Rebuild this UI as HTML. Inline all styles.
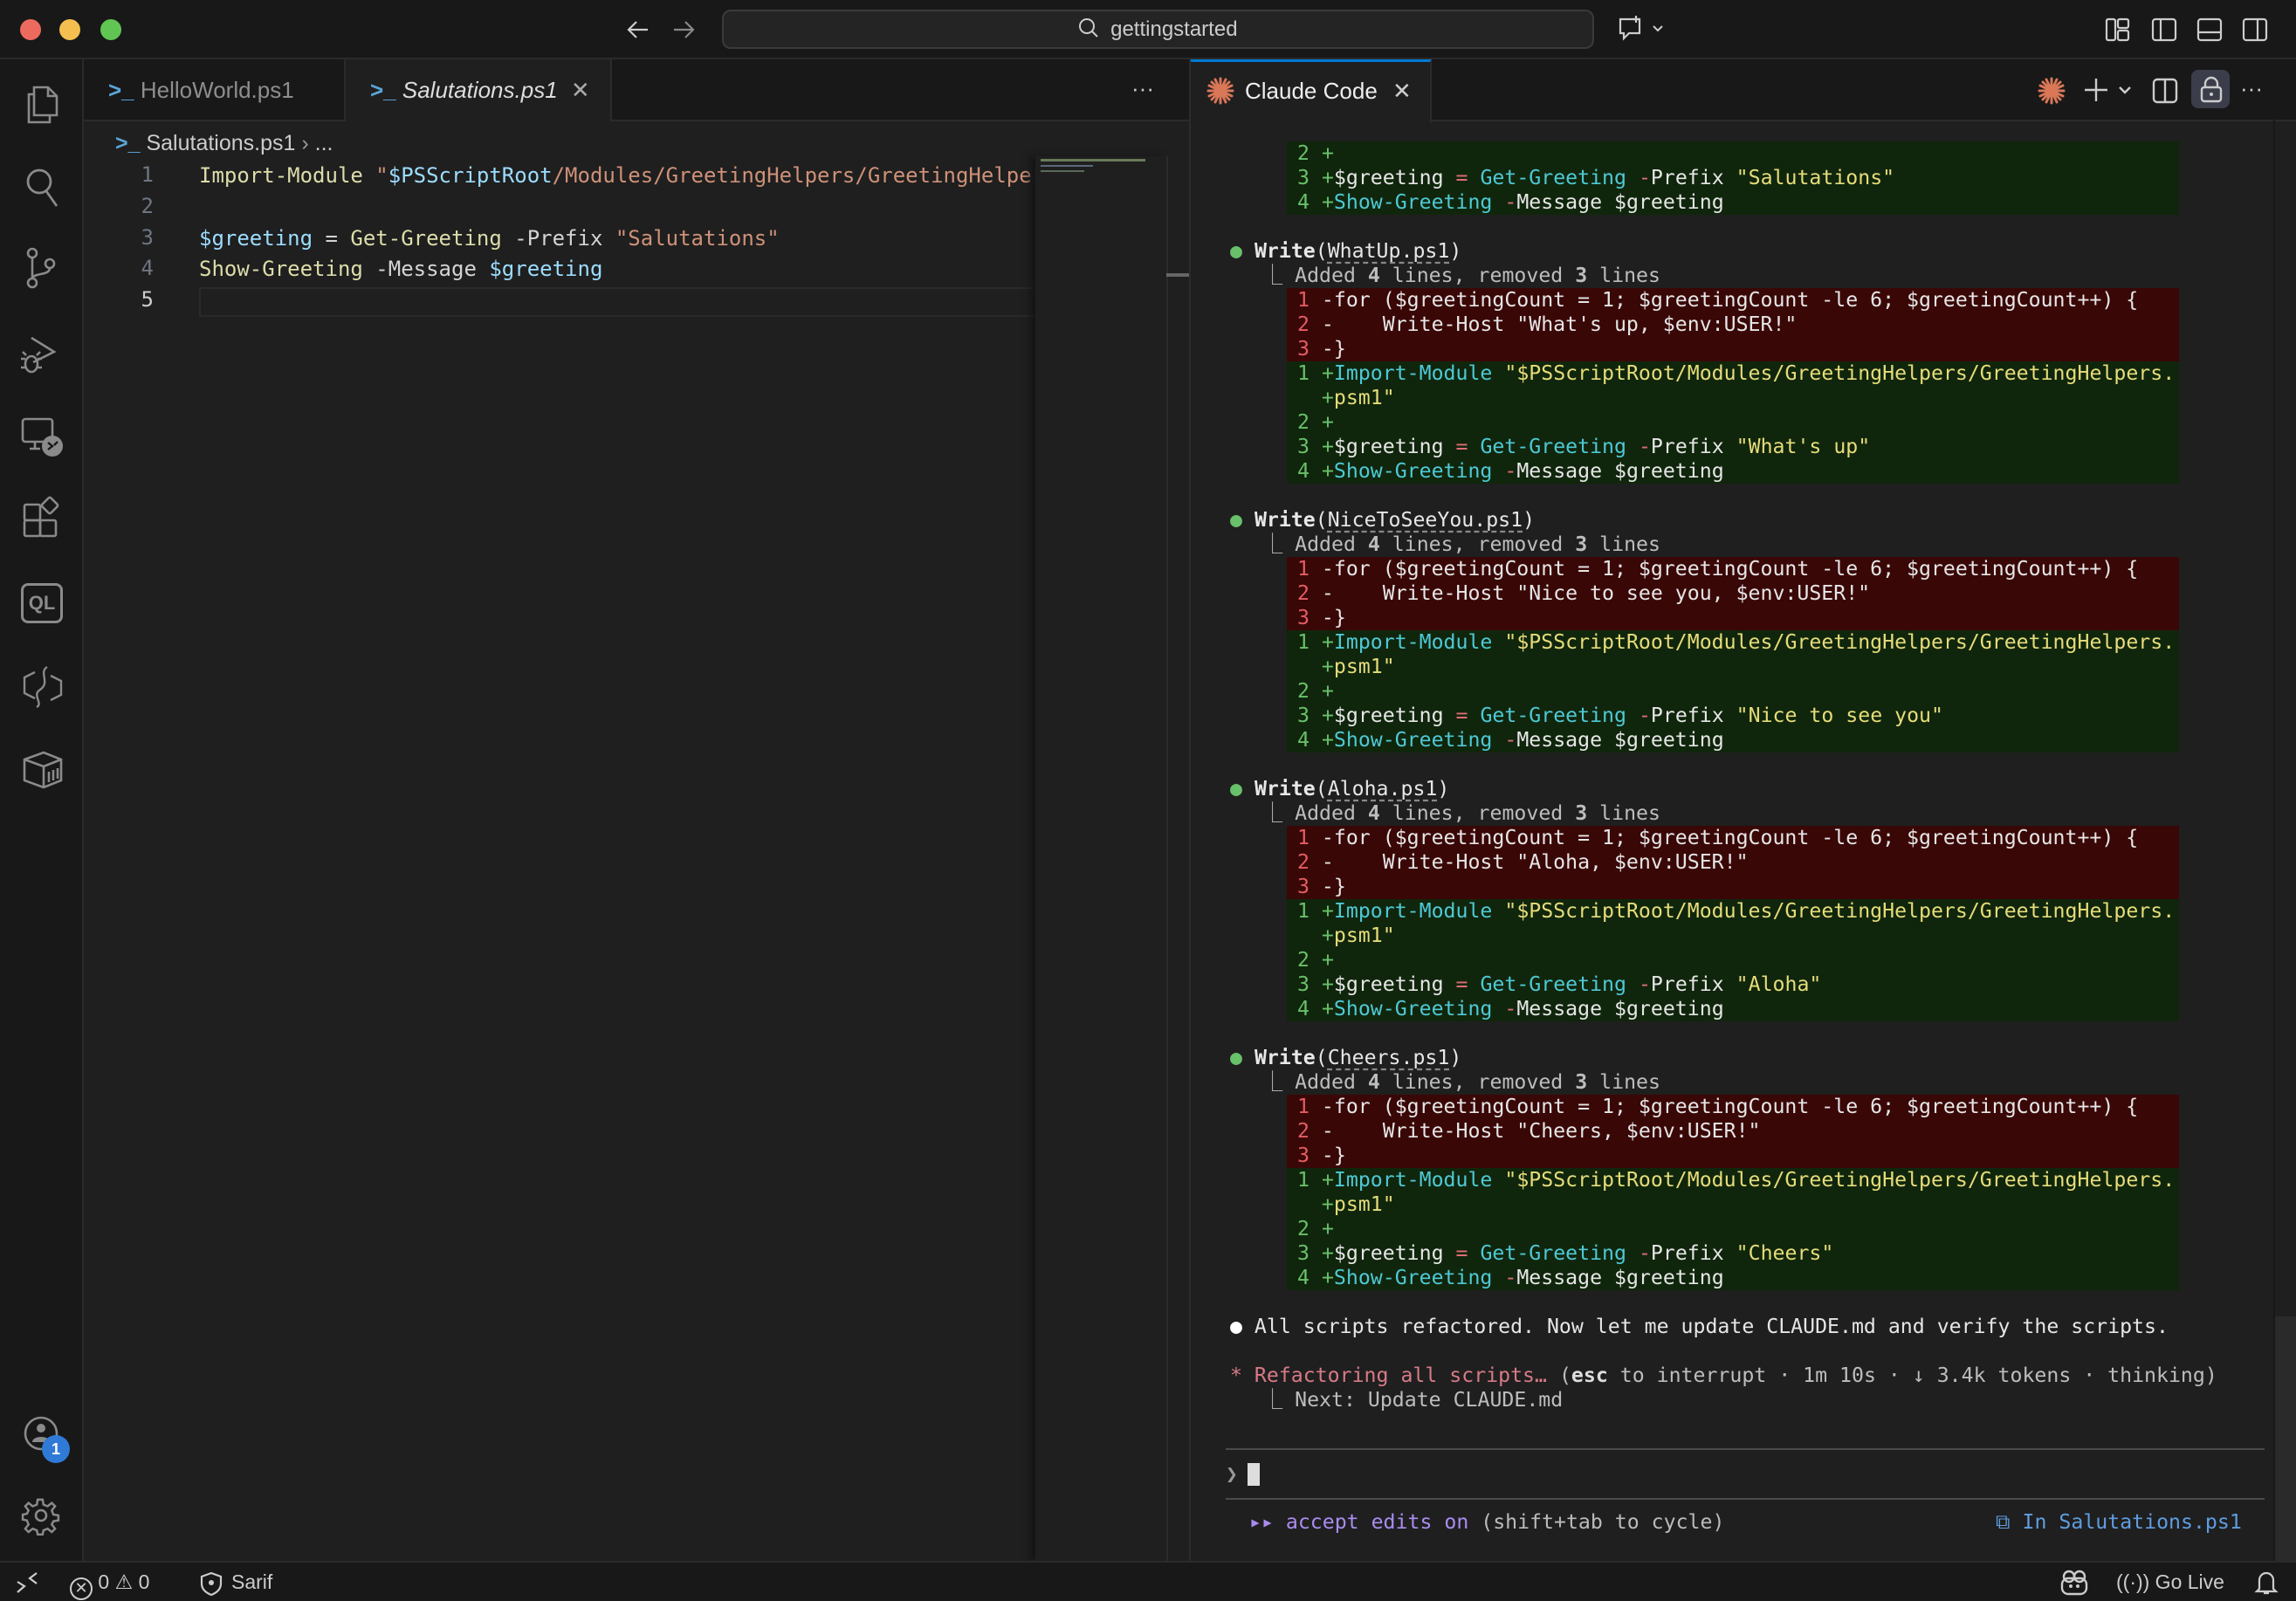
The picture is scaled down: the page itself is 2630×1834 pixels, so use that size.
<!DOCTYPE html>
<html><head><meta charset="utf-8"><style>
*{margin:0;padding:0;box-sizing:border-box}
html,body{width:2630px;height:1834px;overflow:hidden;background:#181818;font-family:"Liberation Sans",sans-serif;color:#ccc}
.abs{position:absolute}
.mono{font-family:"DejaVu Sans Mono","Liberation Mono",monospace}
#title{left:0;top:0;width:2630px;height:68px;background:#181818;border-bottom:2px solid #2a2a2a}
.tl{width:24px;height:24px;border-radius:50%;top:22px}
#search{left:827px;top:11px;width:999px;height:45px;background:#242424;border:2px solid #3a3a3a;border-radius:10px;text-align:center;font-size:24px;line-height:41px;color:#ccc}
#act{left:0;top:68px;width:96px;height:1720px;background:#181818;border-right:2px solid #2b2b2b}
#tabs{left:96px;top:68px;width:1266px;height:71px;background:#181818;border-bottom:2px solid #2b2b2b}
.tab{top:0;height:71px;font-size:26px;line-height:71px;padding-left:28px;border-right:2px solid #2b2b2b}
#editor{left:96px;top:139px;width:1266px;height:1649px;background:#1f1f1f}
.code{font-size:24px;line-height:35.8px;white-space:pre}
#rp{left:1362px;top:68px;width:1268px;height:1720px;background:#1f1f1f;border-left:2px solid #2b2b2b}
#rtabs{left:0;top:0;width:1268px;height:71px;background:#181818;border-bottom:2px solid #2b2b2b}
#rc{left:45px;top:94px;width:1190px;font-size:23.2px;line-height:28px;white-space:pre;color:#e6e6e6}
.g,.d{margin-left:65px;width:1022px;padding-left:12px;height:28px}
.g{background:#10260c}.d{background:#3a0707}
.g .n{color:#69c06a}.d .n{color:#e35d62}
.c{color:#4ec9d6}.y{color:#e6dc7a}.p{color:#e06c75}.gp{color:#69c06a}
.h{color:#e8e8e8}.u{text-decoration:underline dashed #888;text-underline-offset:5px}
.dim{color:#bdbdbd}
.s{padding-left:23px}
#status{left:0;top:1788px;width:2630px;height:46px;background:#181818;border-top:2px solid #2b2b2b;font-size:23px;line-height:44px;color:#ccc}
svg{position:absolute;overflow:visible}
</style></head><body>

<div id="title" class="abs">
 <div class="abs tl" style="left:23px;background:#ed6a5e"></div>
 <div class="abs tl" style="left:68px;background:#f4bf4f"></div>
 <div class="abs tl" style="left:115px;background:#61c554"></div>
 <svg style="left:718px;top:22px" width="26" height="24"><path d="M24 12H3M11 3L2 12L11 21" stroke="#ccc" stroke-width="2.2" fill="none"/></svg>
 <svg style="left:770px;top:22px" width="26" height="24"><path d="M2 12H23M15 3L24 12L15 21" stroke="#888" stroke-width="2.2" fill="none"/></svg>
 <div id="search" class="abs"><span style="display:inline-block;position:relative;width:30px;height:24px;vertical-align:-3px"><svg style="left:0;top:0" width="26" height="26"><circle cx="10" cy="10" r="8" stroke="#ccc" stroke-width="2" fill="none"/><path d="M16 16L22 22" stroke="#ccc" stroke-width="2"/></svg></span> gettingstarted</div>
 <svg style="left:1852px;top:18px" width="60" height="32"><path d="M4 4H26V20H14L8 26V20H4Z" stroke="#ccc" stroke-width="2.2" fill="none"/><path d="M22 0V8M18 4H26" stroke="#ccc" stroke-width="2.2"/><path d="M42 12L47 17L52 12" stroke="#ccc" stroke-width="2" fill="none"/></svg>
 <svg style="left:2412px;top:20px" width="200" height="28">
  <g stroke="#ccc" stroke-width="2.2" fill="none">
   <rect x="1" y="2" width="10" height="24" rx="2"/><rect x="14" y="2" width="12" height="10" rx="2"/><rect x="14" y="15" width="12" height="11" rx="2"/>
   <rect x="54" y="2" width="26" height="24" rx="3"/><path d="M63 2V26"/>
   <rect x="106" y="2" width="26" height="24" rx="3"/><path d="M106 17H132"/>
   <rect x="158" y="2" width="26" height="24" rx="3"/><path d="M174 2V26"/>
  </g></svg>
</div>

<div id="act" class="abs">
 <svg style="left:27px;top:26px" width="44" height="50"><g stroke="#8a8a8a" stroke-width="2.6" fill="none"><path d="M12 6H28L38 16V38H12Z"/><path d="M28 6V16H38"/><path d="M12 14H6V46H30V38"/></g></svg>
 <svg style="left:27px;top:124px" width="44" height="50"><g stroke="#8a8a8a" stroke-width="2.8" fill="none"><circle cx="18" cy="16" r="13"/><path d="M26 27L38 44"/></g></svg>
 <svg style="left:27px;top:214px" width="44" height="50"><g stroke="#8a8a8a" stroke-width="2.6" fill="none"><circle cx="10" cy="8" r="5"/><circle cx="10" cy="42" r="5"/><circle cx="30" cy="20" r="5"/><path d="M10 13V37M30 25C30 34 12 30 10 37"/></g></svg>
 <svg style="left:22px;top:315px" width="50" height="50"><g stroke="#8a8a8a" stroke-width="2.6" fill="none"><path d="M14 4L40 20L16 32"/><ellipse cx="14" cy="34" rx="7" ry="9"/><path d="M2 28H7M2 38H7M21 28H26M21 38H26M8 24L4 20M20 24L24 20"/></g></svg>
 <svg style="left:22px;top:408px" width="50" height="50"><g stroke="#8a8a8a" stroke-width="2.6" fill="none"><rect x="4" y="4" width="34" height="26" rx="3"/><path d="M12 38H24M18 30V38"/></g><circle cx="38" cy="35" r="12" fill="#8a8a8a"/><path d="M33 31L38 35L33 39M44 30L40 34" stroke="#181818" stroke-width="2.4" fill="none"/></svg>
 <svg style="left:26px;top:502px" width="46" height="46"><g stroke="#8a8a8a" stroke-width="2.6" fill="none"><rect x="2" y="8" width="18" height="18" rx="2"/><rect x="2" y="26" width="18" height="18" rx="2"/><rect x="20" y="26" width="18" height="18" rx="2"/><rect x="24" y="2" width="14" height="14" rx="2" transform="rotate(45 31 9)"/></g></svg>
 <div class="abs" style="left:24px;top:600px;width:48px;height:46px;border:3px solid #8a8a8a;border-radius:8px;color:#8a8a8a;font:bold 22px 'Liberation Sans',sans-serif;text-align:center;line-height:40px">QL</div>
 <svg style="left:24px;top:694px" width="50" height="50"><g stroke="#8a8a8a" stroke-width="2.4" fill="none"><path d="M16 8L4 14V32L16 38M34 12L46 18V34L34 40"/><path d="M30 2C20 8 34 20 22 28C12 34 26 44 18 48"/></g></svg>
 <svg style="left:24px;top:790px" width="50" height="46"><g stroke="#8a8a8a" stroke-width="2.6" fill="none"><path d="M4 12L26 4L46 12V36L26 44L4 36Z"/><path d="M4 12L26 20L46 12M26 20V44M32 26V38M37 24V36M42 22V34"/></g></svg>
 <svg style="left:27px;top:1554px" width="50" height="50"><circle cx="20" cy="20" r="18" stroke="#8a8a8a" stroke-width="2.6" fill="none"/><circle cx="20" cy="14" r="5" fill="#8a8a8a"/><path d="M10 30C10 22 30 22 30 30Z" fill="#8a8a8a"/></svg>
 <div class="abs" style="left:48px;top:1576px;width:32px;height:32px;border-radius:50%;background:#2f7ad6;color:#fff;font:bold 18px 'Liberation Sans';text-align:center;line-height:32px">1</div>
 <svg style="left:27px;top:1648px" width="44" height="44"><g stroke="#8a8a8a" stroke-width="2.6" fill="none"><circle cx="20" cy="20" r="6"/><path d="M17 2H23L24 8L29 10L34 6L38 10L34 15L36 20L42 21V27L36 28L34 32L38 37L34 41L29 37L24 39L23 44H17L16 39L11 37L6 41L2 37L6 32L4 27L-1 26V20L4 19L6 15L2 10L6 6L11 10L16 8Z" transform="scale(0.95)"/></g></svg>
</div>

<div id="tabs" class="abs">
 <div class="abs tab" style="left:0;width:300px;color:#8e8e8e"><span style="color:#5aa5d8;font-weight:bold">&gt;_</span> HelloWorld.ps1</div>
 <div class="abs tab" style="left:300px;width:305px;background:#1f1f1f;height:73px;color:#ddd;font-style:italic"><span style="color:#5aa5d8;font-weight:bold;font-style:normal">&gt;_</span> Salutations.ps1 <span style="font-style:normal;color:#aaa;margin-left:8px">✕</span></div>
 <div class="abs" style="left:1200px;top:0;line-height:66px;font-size:26px;color:#ccc">···</div>
</div>

<div id="editor" class="abs">
 <div class="abs" style="left:36px;top:6px;font-size:25px;line-height:38px;color:#ccc"><span style="color:#5aa5d8;font-weight:bold">&gt;_</span> Salutations.ps1 <span style="color:#999">›</span> ...</div>
 <div class="abs code mono" style="left:40px;top:44px;width:40px;text-align:right;color:#6e7681">1
2
3
4
<span style="color:#ccc">5</span></div>
 <div class="abs" style="left:132px;top:190px;width:1054px;height:34px;border:2px solid #2a2a2a"></div>
 <div class="abs code mono" style="left:132px;top:45px;width:1054px;overflow:hidden;color:#d4d4d4"><span style="color:#dcdcaa">Import-Module</span> <span style="color:#ce9178">"</span><span style="color:#9cdcfe">$PSScriptRoot</span><span style="color:#ce9178">/Modules/GreetingHelpers/GreetingHelpers.psm1"</span>

<span style="color:#9cdcfe">$greeting</span> = <span style="color:#dcdcaa">Get-Greeting</span> -Prefix <span style="color:#ce9178">"Salutations"</span>
<span style="color:#dcdcaa">Show-Greeting</span> -Message <span style="color:#9cdcfe">$greeting</span>
</div>
 <div class="abs" style="left:1090px;top:40px;width:150px;height:1609px;background:#1f1f1f;box-shadow:-6px 0 8px #151515"></div>
 <div class="abs" style="left:1096px;top:43px;width:120px;height:3px;background:#6a7a5a"></div>
 <div class="abs" style="left:1096px;top:50px;width:60px;height:2px;background:#5a6a7a"></div>
 <div class="abs" style="left:1096px;top:56px;width:50px;height:2px;background:#5a6a5a"></div>
 <div class="abs" style="left:1240px;top:40px;width:2px;height:1609px;background:#2b2b2b"></div>
 <div class="abs" style="left:1240px;top:174px;width:26px;height:4px;background:#666"></div>
</div>

<div id="rp" class="abs">
 <div id="rtabs" class="abs">
  <div class="abs" style="left:0;top:0;width:276px;height:73px;background:#1f1f1f;border-top:3px solid #0078d4;border-right:2px solid #2b2b2b;font-size:26px;line-height:66px;color:#eee;padding-left:62px">Claude Code <span style="color:#ccc;margin-left:10px">✕</span></div>
  <svg style="left:18px;top:20px" width="32" height="32"><g stroke="#d97757" stroke-width="3" stroke-linecap="round"><path d="M16 2V30M2 16H30M6 6L26 26M26 6L6 26M10 3L22 29M22 3L10 29M3 10L29 22M3 22L29 10"/></g></svg>
  <svg style="left:970px;top:20px" width="32" height="32"><g stroke="#d97757" stroke-width="3" stroke-linecap="round"><path d="M16 2V30M2 16H30M6 6L26 26M26 6L6 26M10 3L22 29M22 3L10 29M3 10L29 22M3 22L29 10"/></g></svg>
  <svg style="left:1024px;top:22px" width="60" height="28"><g stroke="#ccc" stroke-width="2.4" fill="none"><path d="M13 0V26M0 13H26M40 10L46 16L52 10"/></g></svg>
  <svg style="left:1102px;top:22px" width="28" height="28"><g stroke="#ccc" stroke-width="2.4" fill="none"><rect x="1" y="1" width="26" height="26" rx="4"/><path d="M14 1V27"/></g></svg>
  <div class="abs" style="left:1146px;top:12px;width:44px;height:44px;border-radius:8px;background:#3b3d4a"></div>
  <svg style="left:1157px;top:20px" width="24" height="30"><g stroke="#ccc" stroke-width="2.4" fill="none"><rect x="1" y="12" width="22" height="16" rx="3"/><path d="M5 12V8A7 7 0 0 1 19 8V12"/></g><circle cx="12" cy="20" r="2" fill="#ccc"/></svg>
  <div class="abs" style="left:1202px;top:0;line-height:66px;font-size:26px;color:#ccc">···</div>
 </div>

 <div id="rc" class="abs mono"><div class="g"><span class="n">2</span> <span class="gp">+</span></div><div class="g"><span class="n">3</span> <span class="gp">+</span>$greeting <span class="p">=</span> <span class="c">Get-Greeting</span> <span class="p">-</span>Prefix <span class="y">"Salutations"</span></div><div class="g"><span class="n">4</span> <span class="gp">+</span><span class="c">Show-Greeting</span> <span class="p">-</span>Message $greeting</div>
<div><span class="gp">●</span> <b class="h">Write</b>(<span class="u">WhatUp.ps1</span>)</div><div class="dim s"> ⎿ Added <b>4</b> lines, removed <b>3</b> lines</div><div class="d"><span class="n">1</span> -for ($greetingCount = 1; $greetingCount -le 6; $greetingCount++) {</div><div class="d"><span class="n">2</span> -    Write-Host "What's up, $env:USER!"</div><div class="d"><span class="n">3</span> -}</div><div class="g"><span class="n">1</span> <span class="gp">+</span><span class="c">Import-Module</span> <span class="y">"$PSScriptRoot/Modules/GreetingHelpers/GreetingHelpers.</span></div><div class="g">  <span class="gp">+</span><span class="y">psm1"</span></div><div class="g"><span class="n">2</span> <span class="gp">+</span></div><div class="g"><span class="n">3</span> <span class="gp">+</span>$greeting <span class="p">=</span> <span class="c">Get-Greeting</span> <span class="p">-</span>Prefix <span class="y">"What's up"</span></div><div class="g"><span class="n">4</span> <span class="gp">+</span><span class="c">Show-Greeting</span> <span class="p">-</span>Message $greeting</div>
<div><span class="gp">●</span> <b class="h">Write</b>(<span class="u">NiceToSeeYou.ps1</span>)</div><div class="dim s"> ⎿ Added <b>4</b> lines, removed <b>3</b> lines</div><div class="d"><span class="n">1</span> -for ($greetingCount = 1; $greetingCount -le 6; $greetingCount++) {</div><div class="d"><span class="n">2</span> -    Write-Host "Nice to see you, $env:USER!"</div><div class="d"><span class="n">3</span> -}</div><div class="g"><span class="n">1</span> <span class="gp">+</span><span class="c">Import-Module</span> <span class="y">"$PSScriptRoot/Modules/GreetingHelpers/GreetingHelpers.</span></div><div class="g">  <span class="gp">+</span><span class="y">psm1"</span></div><div class="g"><span class="n">2</span> <span class="gp">+</span></div><div class="g"><span class="n">3</span> <span class="gp">+</span>$greeting <span class="p">=</span> <span class="c">Get-Greeting</span> <span class="p">-</span>Prefix <span class="y">"Nice to see you"</span></div><div class="g"><span class="n">4</span> <span class="gp">+</span><span class="c">Show-Greeting</span> <span class="p">-</span>Message $greeting</div>
<div><span class="gp">●</span> <b class="h">Write</b>(<span class="u">Aloha.ps1</span>)</div><div class="dim s"> ⎿ Added <b>4</b> lines, removed <b>3</b> lines</div><div class="d"><span class="n">1</span> -for ($greetingCount = 1; $greetingCount -le 6; $greetingCount++) {</div><div class="d"><span class="n">2</span> -    Write-Host "Aloha, $env:USER!"</div><div class="d"><span class="n">3</span> -}</div><div class="g"><span class="n">1</span> <span class="gp">+</span><span class="c">Import-Module</span> <span class="y">"$PSScriptRoot/Modules/GreetingHelpers/GreetingHelpers.</span></div><div class="g">  <span class="gp">+</span><span class="y">psm1"</span></div><div class="g"><span class="n">2</span> <span class="gp">+</span></div><div class="g"><span class="n">3</span> <span class="gp">+</span>$greeting <span class="p">=</span> <span class="c">Get-Greeting</span> <span class="p">-</span>Prefix <span class="y">"Aloha"</span></div><div class="g"><span class="n">4</span> <span class="gp">+</span><span class="c">Show-Greeting</span> <span class="p">-</span>Message $greeting</div>
<div><span class="gp">●</span> <b class="h">Write</b>(<span class="u">Cheers.ps1</span>)</div><div class="dim s"> ⎿ Added <b>4</b> lines, removed <b>3</b> lines</div><div class="d"><span class="n">1</span> -for ($greetingCount = 1; $greetingCount -le 6; $greetingCount++) {</div><div class="d"><span class="n">2</span> -    Write-Host "Cheers, $env:USER!"</div><div class="d"><span class="n">3</span> -}</div><div class="g"><span class="n">1</span> <span class="gp">+</span><span class="c">Import-Module</span> <span class="y">"$PSScriptRoot/Modules/GreetingHelpers/GreetingHelpers.</span></div><div class="g">  <span class="gp">+</span><span class="y">psm1"</span></div><div class="g"><span class="n">2</span> <span class="gp">+</span></div><div class="g"><span class="n">3</span> <span class="gp">+</span>$greeting <span class="p">=</span> <span class="c">Get-Greeting</span> <span class="p">-</span>Prefix <span class="y">"Cheers"</span></div><div class="g"><span class="n">4</span> <span class="gp">+</span><span class="c">Show-Greeting</span> <span class="p">-</span>Message $greeting</div>
<div><span style="color:#fff">●</span> All scripts refactored. Now let me update CLAUDE.md and verify the scripts.</div>
<div><span style="color:#d77a86">* Refactoring all scripts…</span> <span class="dim">(<b style="color:#ddd">esc</b> to interrupt · 1m 10s · ↓ 3.4k tokens · thinking)</span></div><div class="dim s"> ⎿ Next: Update CLAUDE.md</div></div>

 <div class="abs" style="left:40px;top:1591px;width:1190px;height:2px;background:#4a4a4a"></div>
 <div class="abs mono" style="left:40px;top:1606px;font-size:23px;line-height:30px;color:#999">❯</div>
 <div class="abs" style="left:65px;top:1608px;width:14px;height:26px;background:#ddd"></div>
 <div class="abs" style="left:40px;top:1648px;width:1190px;height:2px;background:#4a4a4a"></div>
 <div class="abs mono" style="left:67px;top:1662px;font-size:23.2px;line-height:28px;white-space:pre"><span style="color:#a98cf0">▸▸ accept edits on</span><span style="color:#bbb"> (shift+tab to cycle)</span></div>
 <div class="abs mono" style="left:922px;top:1662px;font-size:23.2px;line-height:28px;color:#5f9de0;white-space:pre">⧉ In Salutations.ps1</div>
 <div class="abs" style="left:1240px;top:0;width:28px;height:1720px;border-left:2px solid #181818"></div>
 <div class="abs" style="left:1242px;top:1440px;width:24px;height:280px;background:#2a2a2a"></div>
</div>

<div id="status" class="abs">
 <svg style="left:18px;top:10px" width="26" height="26"><path d="M2 24L10 17L2 12M24 2L16 8L24 14" stroke="#ccc" stroke-width="2.2" fill="none"/></svg>
 <div class="abs" style="left:80px;top:0;white-space:pre"><span style="display:inline-block;width:26px;height:26px;border:2px solid #ccc;border-radius:50%;vertical-align:-5px;text-align:center;line-height:20px;font-size:18px">✕</span> 0 ⚠ 0</div>
 <svg style="left:229px;top:10px" width="26" height="28"><path d="M13 2L24 6V14C24 21 18 25 13 27C8 25 2 21 2 14V6Z" stroke="#ccc" stroke-width="2.2" fill="none"/><circle cx="13" cy="13" r="3" fill="#ccc"/></svg>
 <div class="abs" style="left:265px;top:0">Sarif</div>
 <svg style="left:2360px;top:8px" width="32" height="30"><g stroke="#ccc" stroke-width="2.4" fill="none"><rect x="2" y="10" width="28" height="18" rx="7"/><circle cx="10" cy="8" r="6"/><circle cx="22" cy="8" r="6"/></g><circle cx="12" cy="19" r="2" fill="#ccc"/><circle cx="20" cy="19" r="2" fill="#ccc"/></svg>
 <div class="abs" style="left:2424px;top:0">((·)) Go Live</div>
 <svg style="left:2583px;top:8px" width="26" height="30"><path d="M5 22V12A8 8 0 0 1 21 12V22L24 25H2Z M10 27H16" stroke="#ccc" stroke-width="2.2" fill="none"/></svg>
</div>
</body></html>
